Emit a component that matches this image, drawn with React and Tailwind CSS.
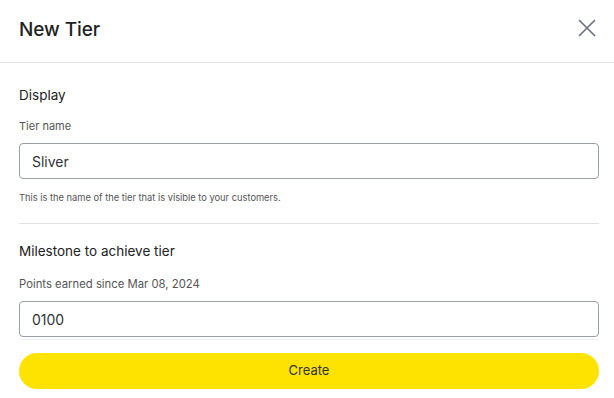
import React from "react";

export default function App() {
  return (
    <div className="w-[614px] h-[398px] bg-white overflow-hidden text-[#222]" style={{ fontFamily: "Inter, 'Noto Sans', sans-serif" }}>
      <div className="h-[63px] flex items-center justify-between pl-[19px] pr-[16px] border-b border-[#e2e2e2]">
        <h1 className="text-[19px] font-medium tracking-[-0.1px] text-[#1f1f1f] mt-[-2px]">New Tier</h1>
        <svg width="20" height="20" viewBox="0 0 20 20" className="mt-[-6px] mr-[1px]">
          <path d="M2 2 L18 18 M18 2 L2 18" stroke="#6b7280" strokeWidth="1.7" fill="none" />
        </svg>
      </div>
      <div className="pl-[19px] pr-[15px] pt-[23px]">
        <div className="text-[13.5px] text-[#222] leading-[18px]">Display</div>
        <div className="text-[11px] text-[#555] mt-[15px] leading-[14px]">Tier name</div>
        <div className="mt-[10px] h-[36px] border border-[#9a9ea6] rounded-[4px] flex items-center px-[12px] text-[14px] text-[#333]">Sliver</div>
        <div className="text-[9.3px] text-[#555] mt-[13px] leading-[12px]">This is the name of the tier that is visible to your customers.</div>
        <div className="mt-[19px] border-t border-[#e2e2e8]"></div>
        <div className="text-[13.5px] text-[#222] mt-[18px] leading-[18px]">Milestone to achieve tier</div>
        <div className="text-[11.3px] text-[#555] mt-[17px] leading-[14px]">Points earned since Mar 08, 2024</div>
        <div className="mt-[10px] h-[36px] border border-[#9a9ea6] rounded-[4px] flex items-center px-[12px] text-[14px] text-[#333]">0100</div>
        <div className="mt-[2px] border-t border-[#eef0f2]"></div>
        <button className="mt-[13px] w-full h-[36px] rounded-full bg-[#ffe300] text-[13px] text-[#333] flex items-center justify-center">Create</button>
      </div>
    </div>
  );
}
